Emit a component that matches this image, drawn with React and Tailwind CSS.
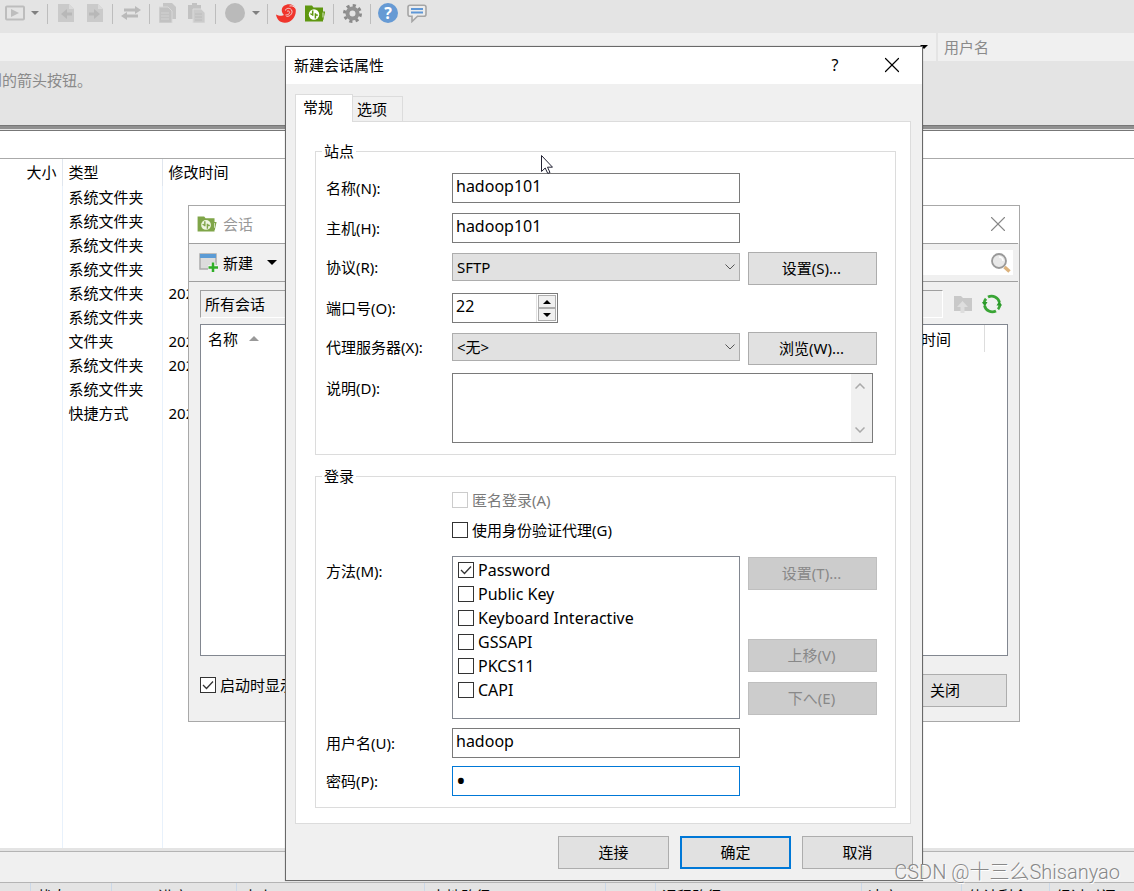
import React from "react";
import { X } from "lucide-react";

const rows = [
  ["系统文件夹", ""],
  ["系统文件夹", ""],
  ["系统文件夹", ""],
  ["系统文件夹", ""],
  ["系统文件夹", "2023/"],
  ["系统文件夹", ""],
  ["文件夹", "2023/"],
  ["系统文件夹", "2023/"],
  ["系统文件夹", ""],
  ["快捷方式", "2023/"],
];

const methods = ["Password", "Public Key", "Keyboard Interactive", "GSSAPI", "PKCS11", "CAPI"];

const Sep = ({ className = "" }) => <span className={`h-5 w-px shrink-0 bg-[#bdbdbd] ${className}`} />;

const Down = ({ className = "" }) => (
  <svg viewBox="0 0 8 4" className={`h-1 w-2 shrink-0 ${className}`}>
    <path d="M0 0h8L4 4z" fill="currentColor" />
  </svg>
);

function ToolButton({ label, className = "", children }) {
  return (
    <button type="button" aria-label={label} className={`flex h-6 shrink-0 items-center justify-center ${className}`}>
      {children}
    </button>
  );
}

function FolderLogo({ className = "", color, light = "#fff" }) {
  return (
    <svg viewBox="0 0 20 17" className={className}>
      <path d="M0 .5h7l1.500 2H18v4h2.200L18.300 15H18v1.500H0z" fill={color} />
      <path d="M18 7.500v5" stroke={light} strokeWidth=".8" />
      <circle cx="9" cy="9.500" r="5.200" fill={light} />
      <path d="M7.700 5.500v5.300M7.700 9.500a2 2 0 0 1-2.200-1M10.400 13.500V8.300M10.400 9.700a2 2 0 0 1 2.200 1" stroke={color} strokeWidth="1.500" fill="none" />
    </svg>
  );
}

function Toolbar() {
  return (
    <div className="flex h-[33px] shrink-0 items-start bg-[#e4e4e4] pt-px pl-[5px] text-[#808080]">
      <ToolButton label="运行" className="w-5">
        <svg viewBox="0 0 20 16" className="h-4 w-5">
          <rect x="1" y="1.500" width="18" height="13" rx="1" fill="none" stroke="#bdbdbd" strokeWidth="2" />
          <path d="M6 4v8l8-4z" fill="#bdbdbd" />
        </svg>
      </ToolButton>
      <ToolButton label="运行选项" className="ml-[6px] w-2"><Down /></ToolButton>
      <Sep className="mt-[3px] ml-2" />
      {["向左传输", "向右传输"].map((label, i) => (
        <ToolButton key={label} label={label} className={i ? "ml-[13px] w-4" : "ml-[10px] w-4"}>
          <svg viewBox="0 0 16 18" className="h-[18px] w-4">
            <path d="M0 0h11l5 5v13H0z" fill="#cacaca" />
            <path d="M11 0l5 5h-5z" fill="#dadada" />
            {i ? <path d="M2 8.500h5V5l6 5-6 5v-3.500H2z" fill="#b8b8b8" /> : <path d="M14 8.500H9V5l-6 5 6 5v-3.500h5z" fill="#b8b8b8" />}
          </svg>
        </ToolButton>
      ))}
      <Sep className="mt-[3px] ml-[9px]" />
      <ToolButton label="交换" className="ml-2 w-5">
        <svg viewBox="0 0 20 14" className="h-[14px] w-5">
          <path d="M3 2.500h11V0l6 4-6 4V5.500H3zM17 8.500H6V6L0 10l6 4v-2.500h11z" fill="#bababa" />
        </svg>
      </ToolButton>
      <Sep className="mt-[3px] ml-2" />
      <ToolButton label="复制" className="ml-[9px] w-[17px]">
        <svg viewBox="0 0 17 20" className="h-5 w-[17px]">
          <path d="M4 0h9l4 4v12H4z" fill="#c6c6c6" />
          <path d="M0 4h9l4 4v12H0z" fill="#c2c2c2" stroke="#d8d8d8" />
          <path d="M2 10h8M2 13h8M2 16h8" stroke="#d2d2d2" />
        </svg>
      </ToolButton>
      <ToolButton label="粘贴" className="ml-3 w-[17px]">
        <svg viewBox="0 0 17 20" className="h-5 w-[17px]">
          <path d="M0 2h4V0h5v2h4v14H0z" fill="#c2c2c2" />
          <path d="M5 6h8l4 4v10H5z" fill="#cbcbcb" stroke="#dcdcdc" />
          <path d="M7 11h7M7 14h7M7 17h7" stroke="#bcbcbc" />
        </svg>
      </ToolButton>
      <Sep className="mt-[3px] ml-[10px]" />
      <ToolButton label="编码" className="ml-[9px] w-5"><span className="size-5 rounded-full bg-[#bababa]" /></ToolButton>
      <ToolButton label="编码选项" className="ml-[7px] w-2"><Down /></ToolButton>
      <Sep className="mt-[3px] ml-[7px]" />
      <ToolButton label="终端" className="ml-2 w-5">
        <svg viewBox="0 0 20 19" className="h-[19px] w-5">
          <path d="M0 10.500C2.500 12 6.500 12.300 8 11 5 8.500 5 4 8 1.800 12-1 18.500-.2 19.700 5.500 20.500 12 16 18.500 9 18.700 4 18.800.8 15.500 0 10.500z" fill="#f0352c" />
          <path d="M9.500 6.500c0-2.800 6-3.200 6.500.7.400 3-2.500 5.300-5.500 5.300M11 7.500c1.500-1.500 3.500.5 2.200 2-.8 1-2.200 1.500-3.700 1.500M19.500 4.500c-1-2.500-4-3-6-2.500" stroke="#f2d8d6" strokeWidth="1" fill="none" />
        </svg>
      </ToolButton>
      <ToolButton label="会话" className="ml-[9px] w-5"><FolderLogo color="#5f9710" className="h-[17px] w-5" /></ToolButton>
      <Sep className="mt-[3px] ml-2" />
      <ToolButton label="选项" className="ml-[9px] w-[19px]">
        <svg viewBox="0 0 19 19" className="size-[19px]">
          <circle cx="9.500" cy="9.500" r="8" fill="none" stroke="#8a8a8a" strokeWidth="3" strokeDasharray="3.140 3.140" />
          <circle cx="9.500" cy="9.500" r="5" fill="none" stroke="#929292" strokeWidth="4" />
        </svg>
      </ToolButton>
      <Sep className="mt-[3px] ml-2" />
      <ToolButton label="帮助" className="ml-[7px] w-5">
        <span className="flex size-5 items-center justify-center rounded-full bg-[#669ad4] text-base leading-5 font-bold text-white">?</span>
      </ToolButton>
      <ToolButton label="反馈" className="ml-[9px] w-5">
        <svg viewBox="0 0 20 19" className="h-[19px] w-5">
          <path d="M3 1.200h14q2 0 2 2v7q0 2-2 2h-6.500L5 17.500v-5.300H3q-2 0-2-2v-7q0-2 2-2z" fill="#ececec" stroke="#a5a5a5" strokeWidth="1.600" />
          <path d="M4 5h12M4 8.500h12" stroke="#5f97d6" strokeWidth="2" />
        </svg>
      </ToolButton>
    </div>
  );
}

function MainWindow() {
  return (
    <main className="flex h-screen flex-col overflow-hidden bg-white">
      <Toolbar />
      <div className="flex h-7 shrink-0 items-stretch bg-[#f0f0f0]">
        <div className="flex flex-1 items-center justify-end pr-2"><Down className="text-black" /></div>
        <input aria-label="用户名" placeholder="用户名" className="w-[198px] border-l-2 border-[#e4e4e4] bg-transparent pl-[6px] outline-none placeholder:text-[#8a8a8a]" />
      </div>
      <div className="h-16 shrink-0 bg-[#e4e4e4] pt-[7px] text-[#8a8a8a]">
        <div className="flex h-6 w-[92px] justify-end overflow-hidden whitespace-nowrap leading-6"><span>到的箭头按钮。</span></div>
      </div>
      <div className="h-[6px] shrink-0 border-y border-[#777] bg-[#e4e4e4]"><div className="h-[3px] bg-[#909090]" /></div>
      <div className="h-7 shrink-0 border-b border-[#aaa]" />
      <div className="flex min-h-0 flex-1">
        <table className="h-full w-[286px] table-fixed border-collapse whitespace-nowrap">
          <thead>
            <tr className="h-[27px] text-left">
              <th className="w-[62px] border-r border-[#e0e6ee] p-0 pr-[5px] pb-0.5 text-right font-normal">大小</th>
              <th className="w-[100px] border-r border-[#e0e6ee] p-0 pb-0.5 pl-[6px] font-normal">类型</th>
              <th className="p-0 pb-0.5 pl-[6px] font-normal">修改时间</th>
            </tr>
          </thead>
          <tbody>
            {rows.map(([type, time], i) => (
              <tr key={i} className="h-6">
                <td className="border-r border-[#e8f1fb] p-0" />
                <td className="border-r border-[#e8f1fb] p-0 pb-0.5 pl-[6px]">{type}</td>
                <td className="p-0 pb-0.5 pl-[6px]">{time}</td>
              </tr>
            ))}
            <tr>
              <td className="border-r border-[#e8f1fb] p-0" />
              <td className="border-r border-[#e8f1fb] p-0" />
              <td className="p-0" />
            </tr>
          </tbody>
        </table>
      </div>
      <div className="h-1 shrink-0 border-b border-[#b4b4b4] bg-[#e4e4e4]" />
      <div className="h-[31px] shrink-0 border-b border-[#b4b4b4] bg-[#f0f0f0]" />
      <div className="flex h-2 shrink-0 overflow-hidden bg-[#e4e4e4] leading-5 whitespace-nowrap [&>span]:shrink-0 [&>span]:border-l [&>span]:border-[#cbd8e8] [&>span]:pt-[3px] [&>span]:pl-[6px]">
        <div className="w-[30px] shrink-0" />
        <span className="w-[81px]">状态</span>
        <span className="w-[125px] pr-12 text-right">进度</span>
        <span className="w-[188px]">大小</span>
        <span className="w-[181px]">本地路径</span>
        <span className="w-[50px]" />
        <span className="w-[206px]">远程路径</span>
        <span className="w-[100px]">速度</span>
        <span className="w-[88px]">估计剩余…</span>
        <span className="w-[85px]">经过时间</span>
      </div>
    </main>
  );
}

function Check({ label, checked, disabled, className = "" }) {
  return (
    <label className={`flex items-center gap-1 whitespace-nowrap ${disabled ? "text-[#7a7a7a]" : ""} ${className}`}>
      <span className="relative flex size-4 shrink-0">
        <input
          type="checkbox"
          defaultChecked={checked}
          disabled={disabled}
          className="peer size-4 appearance-none border border-[#333] bg-white disabled:border-[#ccc]"
        />
        <svg viewBox="0 0 16 16" className="pointer-events-none absolute inset-0 hidden size-4 peer-checked:block">
          <path d="M3 8l3.500 3.500L13 4.500" fill="none" stroke="#333" strokeWidth="1.300" />
        </svg>
      </span>
      {label}
    </label>
  );
}

function SessionsWindow() {
  return (
    <section aria-label="会话" className="absolute top-[205px] left-[188px] w-[832px] border border-[#a8a8a8] bg-[#f0f0f0]">
      <header className="flex h-[37px] items-center bg-white pr-2 pb-0.5 pl-2 text-[#999]">
        <FolderLogo color="#7fa548" light="#eef5e0" className="h-4 w-5" />
        <h2 className="ml-[6px] flex-1">会话</h2>
        <button type="button" aria-label="关闭窗口"><X className="size-[26px] text-[#888]" strokeWidth={1} /></button>
      </header>
      <div className="mr-px flex h-[39px] items-center border-y border-[#a0a0a0] pr-[5px] pl-[10px]">
        <svg viewBox="0 0 20 20" className="size-5 shrink-0">
          <rect x="1" y="1" width="16" height="15" fill="#dcdcdc" stroke="#aaa" strokeWidth="1.500" />
          <rect x="1" y="1" width="16" height="4" fill="#5b9bd5" />
          <path d="M14 9.500v10M9 14.500h10" stroke="#f0f0f0" strokeWidth="5" />
          <path d="M14 9.500v9.500M9.500 14.500H19" stroke="#2fae27" strokeWidth="2.500" />
        </svg>
        <button type="button" className="ml-1">新建</button>
        <button type="button" aria-label="新建选项" className="ml-[14px]">
          <svg viewBox="0 0 10 5" className="h-[5px] w-[10px]"><path d="M0 0h10L5 5z" /></svg>
        </button>
        <label className="ml-auto flex h-[25px] w-60 items-center bg-white pr-0.5">
          <input aria-label="搜索" className="min-w-0 flex-1 bg-transparent outline-none" />
          <svg viewBox="0 0 20 20" className="size-5">
            <path d="M13.500 14l5 4.500" stroke="#dcb27c" strokeWidth="3.500" />
            <circle cx="8" cy="8" r="7" fill="#e8e8e8" stroke="#999" strokeWidth="1.800" />
            <path d="M8 4a4 4 0 0 1 4 4" stroke="#fff" strokeWidth="1.500" fill="none" />
          </svg>
        </label>
      </div>
      <div className="flex items-center pt-2 pr-[17px] pl-[11px]">
        <div className="h-7 flex-1 border border-t-[#a0a0a0] border-r-white border-b-white border-l-[#a0a0a0] pl-1 leading-[26px]">所有会话</div>
        <button type="button" aria-label="上一级" className="ml-[10px]">
          <svg viewBox="0 0 20 18" className="h-[18px] w-5">
            <path d="M1 1h7l2 2h9v13H1z" fill="#c9c9c9" />
            <path d="M9.500 6L15 12h-3.500v6h-4v-6H4z" fill="#dedede" />
          </svg>
        </button>
        <button type="button" aria-label="刷新" className="ml-[9px]">
          <svg viewBox="0 0 20 20" className="size-5">
            <path d="M2 9.500A8 8 0 0 1 4 4.800M6 3a8 8 0 0 1 11.500 5.500M18 10.500a8 8 0 0 1-2 4.700M14 17A8 8 0 0 1 2.500 11.500" fill="none" stroke="#39a535" strokeWidth="2.800" />
            <path d="M0 8h5.500l-2.700 4.500zM20 11.500h-5.500L17.300 7z" fill="#2c9a2b" />
          </svg>
        </button>
      </div>
      <div className="mx-[11px] mt-[6px] h-[332px] border border-[#828790] bg-white">
        <div className="flex h-[29px] items-center pb-0.5 pl-[7px]">
          <span>名称</span>
          <svg viewBox="0 0 10 5" className="ml-[11px] h-[5px] w-[10px]"><path d="M0 5h10L5 0z" fill="#999" /></svg>
          <span className="ml-auto flex h-[27px] w-[105px] items-center justify-end border-r border-[#ddd] pr-[33px] whitespace-nowrap">修改时间</span>
          <span className="w-[22px]" />
        </div>
      </div>
      <footer className="flex h-[65px] items-center justify-between pr-[12px] pb-1 pl-[11px]">
        <Check label="启动时显示此对话框" checked className="mb-1" />
        <button type="button" className="mt-2 h-[33px] w-[126px] border border-[#adadad] bg-[#e1e1e1] pb-0.5 pl-0.5">关闭</button>
      </footer>
    </section>
  );
}

const btn = "h-[33px] w-[129px] border border-[#adadad] bg-[#e1e1e1] pr-0.5 pb-0.5 disabled:border-[#bfbfbf] disabled:bg-[#ccc] disabled:text-[#888]";
const field = "h-[30px] w-72 border border-[#7a7a7a] bg-white px-[3px] pb-1 text-base outline-none";

function Row({ label, id, children, className = "" }) {
  return (
    <div className={`flex items-start ${className}`}>
      <label htmlFor={id} className="w-[126px] shrink-0 whitespace-nowrap pt-[5px] leading-5">{label}</label>
      {children}
    </div>
  );
}

function Select({ id, value }) {
  return (
    <div className="relative mt-px mr-2">
      <select id={id} className="block h-7 w-72 appearance-none border border-[#adadad] bg-[#e1e1e1] px-1 outline-none">
        <option>{value}</option>
      </select>
      <svg viewBox="0 0 10 6" className="pointer-events-none absolute top-[11px] right-[5px] h-[6px] w-[10px]">
        <path d="M0.500 0.500L5 5l4.500-4.500" fill="none" stroke="#555" />
      </svg>
    </div>
  );
}

function Group({ title, children, className = "" }) {
  return (
    <fieldset className={`border border-[#dcdcdc] pl-[10px] ${className}`}>
      <legend className="-ml-1 h-5 px-0.5 leading-5">{title}</legend>
      {children}
    </fieldset>
  );
}

function PropertiesDialog() {
  return (
    <section role="dialog" aria-label="新建会话属性" className="absolute top-[46px] left-[285px] w-[638px] border border-[#696969] bg-[#f0f0f0] shadow-[0_0_1px_rgba(0,0,0,0.3)]">
      <header className="flex h-[37px] items-center bg-white pr-[17px] pb-0.5 pl-2">
        <h1 className="flex-1">新建会话属性</h1>
        <button type="button" aria-label="帮助" className="w-4 text-base">?</button>
        <button type="button" aria-label="关闭对话框" className="ml-9"><X className="size-[26px]" strokeWidth={1.100} /></button>
      </header>
      <div className="px-[9px] pt-[10px]">
        <div role="tablist" className="flex items-end">
          <button type="button" role="tab" aria-selected="true" className="relative -mb-px h-7 w-[58px] border border-b-0 border-[#dcdcdc] bg-white pr-3 pb-1">常规</button>
          <button type="button" role="tab" aria-selected="false" className="-ml-px h-[25px] w-[51px] border border-b-0 border-[#dcdcdc] pr-[11px]">选项</button>
        </div>
        <div className="mr-0.5 border border-[#dcdcdc] bg-white pt-[19px] pr-[14px] pb-[15px] pl-[19px]">
          <Group title="站点" className="pb-[11px]">
            <div className="mt-3 flex flex-col">
              <Row label="名称(N):" id="name" className="h-10"><input id="name" defaultValue="hadoop101" className={field} /></Row>
              <Row label="主机(H):" id="host" className="h-[39px]"><input id="host" defaultValue="hadoop101" className={field} /></Row>
              <Row label="协议(R):" id="protocol" className="h-[41px]">
                <Select id="protocol" value="SFTP" />
                <button type="button" className={btn}>设置(S)...</button>
              </Row>
              <Row label="端口号(O):" id="port" className="h-[39px]">
                <div className="flex h-[30px] w-[106px] border border-[#7a7a7a] bg-white">
                  <input id="port" defaultValue="22" className="min-w-0 flex-1 px-[3px] pb-1 text-base outline-none" />
                  <div className="flex w-[21px] flex-col border-l border-[#e0e0e0] bg-white p-px [&>button]:flex [&>button]:flex-1 [&>button]:items-center [&>button]:justify-center [&>button]:border [&>button]:border-[#adadad] [&>button]:bg-[#f0f0f0]">
                    <button type="button" aria-label="增加"><Down className="rotate-180" /></button>
                    <button type="button" aria-label="减少"><Down /></button>
                  </div>
                </div>
              </Row>
              <Row label="代理服务器(X):" id="proxy" className="h-[41px]">
                <Select id="proxy" value="<无>" />
                <button type="button" className={btn}>浏览(W)...</button>
              </Row>
              <Row label="说明(D):" id="desc">
                <div className="flex h-[70px] w-[421px] border border-[#7a7a7a] bg-white">
                  <textarea id="desc" className="min-w-0 flex-1 resize-none p-1 outline-none" />
                  <div className="flex w-[21px] flex-col items-center justify-between bg-[#f0f0f0] py-[9px] pr-[3px]">
                    <svg viewBox="0 0 10 6" className="h-[6px] w-[10px]"><path d="M0.500 5.500L5 1l4.500 4.500" fill="none" stroke="#aaa" strokeWidth="1.500" /></svg>
                    <svg viewBox="0 0 10 6" className="h-[6px] w-[10px]"><path d="M0.500 0.500L5 5l4.500-4.500" fill="none" stroke="#aaa" strokeWidth="1.500" /></svg>
                  </div>
                </div>
              </Row>
            </div>
          </Group>
          <Group title="登录" className="mt-[11px] pb-[11px]">
            <div className="mt-1 ml-[126px] flex flex-col gap-[10px] leading-5">
              <Check label="匿名登录(A)" disabled />
              <Check label="使用身份验证代理(G)" />
            </div>
            <div className="mt-4 flex items-start">
              <span id="methods" className="w-[126px] shrink-0 pt-[5px] leading-5">方法(M):</span>
              <div role="group" aria-labelledby="methods" className="h-[163px] w-72 border border-[#828790] bg-white pt-px pl-[5px] text-base">
                {methods.map((m, i) => <Check key={m} label={m} checked={i === 0} className="h-6" />)}
              </div>
              <div className="ml-2 flex flex-col pt-px">
                <button type="button" disabled className={btn}>设置(T)...</button>
                <button type="button" disabled className={`mt-[49px] ${btn}`}>上移(V)</button>
                <button type="button" disabled className={`mt-[10px] ${btn}`}>下へ(E)</button>
              </div>
            </div>
            <Row label="用户名(U):" id="user" className="mt-[9px]"><input id="user" defaultValue="hadoop" className={field} /></Row>
            <Row label="密码(P):" id="password" className="mt-2">
              <input id="password" type="password" defaultValue="1" className="h-[30px] w-72 border border-[#0078d7] bg-white px-[3px] pb-0.5 text-[26px] leading-6 outline-none" />
            </Row>
          </Group>
        </div>
      </div>
      <footer className="flex justify-end gap-[11px] pt-3 pr-[9px] pb-[11px] [&>button]:h-[33px] [&>button]:w-[111px] [&>button]:bg-[#e1e1e1] [&>button]:pb-0.5">
        <button type="button" className="border border-[#adadad]">连接</button>
        <button type="button" className="border-2 border-[#0078d7]">确定</button>
        <button type="button" className="border border-[#adadad]">取消</button>
      </footer>
    </section>
  );
}

export default function App() {
  return (
    <div className="relative h-screen overflow-hidden font-['Noto_Sans','Noto_Sans_CJK_SC',sans-serif] text-[15px] leading-5 text-black">
      <MainWindow />
      <SessionsWindow />
      <PropertiesDialog />
      <svg viewBox="0 0 12 19" className="pointer-events-none absolute top-[155px] left-[541px] h-[19px] w-3">
        <path d="M0.500 0.500v16l3.700-3.500 2.600 5.500 2.200-1-2.500-5.300h5z" fill="#fff" stroke="#223" />
      </svg>
      <div className="pointer-events-none absolute right-[14px] bottom-[7px] font-['Roboto','Noto_Sans_CJK_SC',sans-serif] text-[20px] leading-6 font-light text-[#888] [text-shadow:1px_1px_0_#fff]">
        CSDN @十三么Shisanyao
      </div>
    </div>
  );
}
